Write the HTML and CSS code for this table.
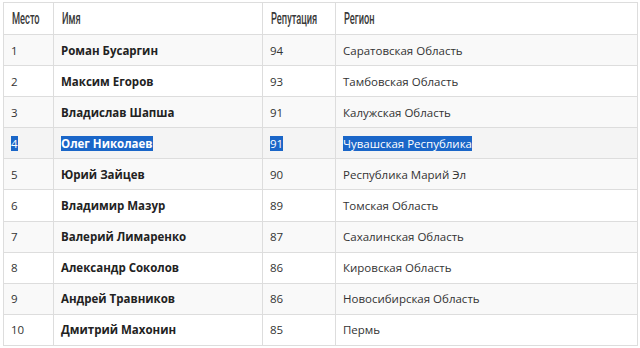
FILE: index.html
```html
<!DOCTYPE html>
<html lang="ru">
<head>
<meta charset="utf-8">
<title>Рейтинг</title>
<link rel="stylesheet" href="styles.css">
</head>
<body>
<table class="rating">
  <colgroup>
    <col class="c-place"><col class="c-name"><col class="c-rep"><col class="c-region">
  </colgroup>
  <thead>
    <tr><th><span class="hd">Место</span></th><th><span class="hd">Имя</span></th><th><span class="hd">Репутация</span></th><th><span class="hd">Регион</span></th></tr>
  </thead>
  <tbody>
    <tr><td>1</td><td class="name">Роман Бусаргин</td><td>94</td><td>Саратовская Область</td></tr>
    <tr><td>2</td><td class="name">Максим Егоров</td><td>93</td><td>Тамбовская Область</td></tr>
    <tr><td>3</td><td class="name">Владислав Шапша</td><td>91</td><td>Калужская Область</td></tr>
    <tr class="hover"><td><span class="sel">4</span></td><td class="name"><span class="sel">Олег Николаев</span></td><td><span class="sel">91</span></td><td><span class="sel">Чувашская Республика</span></td></tr>
    <tr><td>5</td><td class="name">Юрий Зайцев</td><td>90</td><td>Республика Марий Эл</td></tr>
    <tr><td>6</td><td class="name">Владимир Мазур</td><td>89</td><td>Томская Область</td></tr>
    <tr><td>7</td><td class="name">Валерий Лимаренко</td><td>87</td><td>Сахалинская Область</td></tr>
    <tr><td>8</td><td class="name">Александр Соколов</td><td>86</td><td>Кировская Область</td></tr>
    <tr><td>9</td><td class="name">Андрей Травников</td><td>86</td><td>Новосибирская Область</td></tr>
    <tr><td>10</td><td class="name">Дмитрий Махонин</td><td>85</td><td>Пермь</td></tr>
  </tbody>
</table>
</body>
</html>
```
FILE: styles.css
```css
html, body {
  margin: 0;
  padding: 0;
  background: #fff;
}
body {
  padding: 2px 0 0 3px;
  font-family: "Open Sans", "DejaVu Sans", sans-serif;
  font-size: 11.5px;
  color: #333;
}
.rating {
  border-collapse: collapse;
  width: 634px;
  table-layout: fixed;
}
.c-place { width: 50px; }
.c-name { width: 209px; }
.c-rep { width: 73px; }
.c-region { width: 302px; }
.rating th, .rating td {
  border: 1px solid #dddddd;
  text-align: left;
  padding: 0 7px;
  white-space: nowrap;
}
.rating th {
  height: 31px;
  font-family: Roboto, "DejaVu Sans", sans-serif;
  font-weight: 500;
  font-size: 16px;
  color: #3a3a3a;
  vertical-align: middle;
  padding-left: 8px;
}
.hd {
  display: inline-block;
  transform: scaleX(0.58);
  transform-origin: left center;
}
.rating td {
  height: 30.1px;
  vertical-align: middle;
}
.rating tbody tr:nth-child(odd) td {
  background: #f9f9f9;
}
.rating tbody tr.hover td {
  background: #f4f4f4;
}
.rating td.name {
  font-weight: bold;
  color: #222;
}
.sel {
  background: #1a66c8;
  color: #fff;
}
```
